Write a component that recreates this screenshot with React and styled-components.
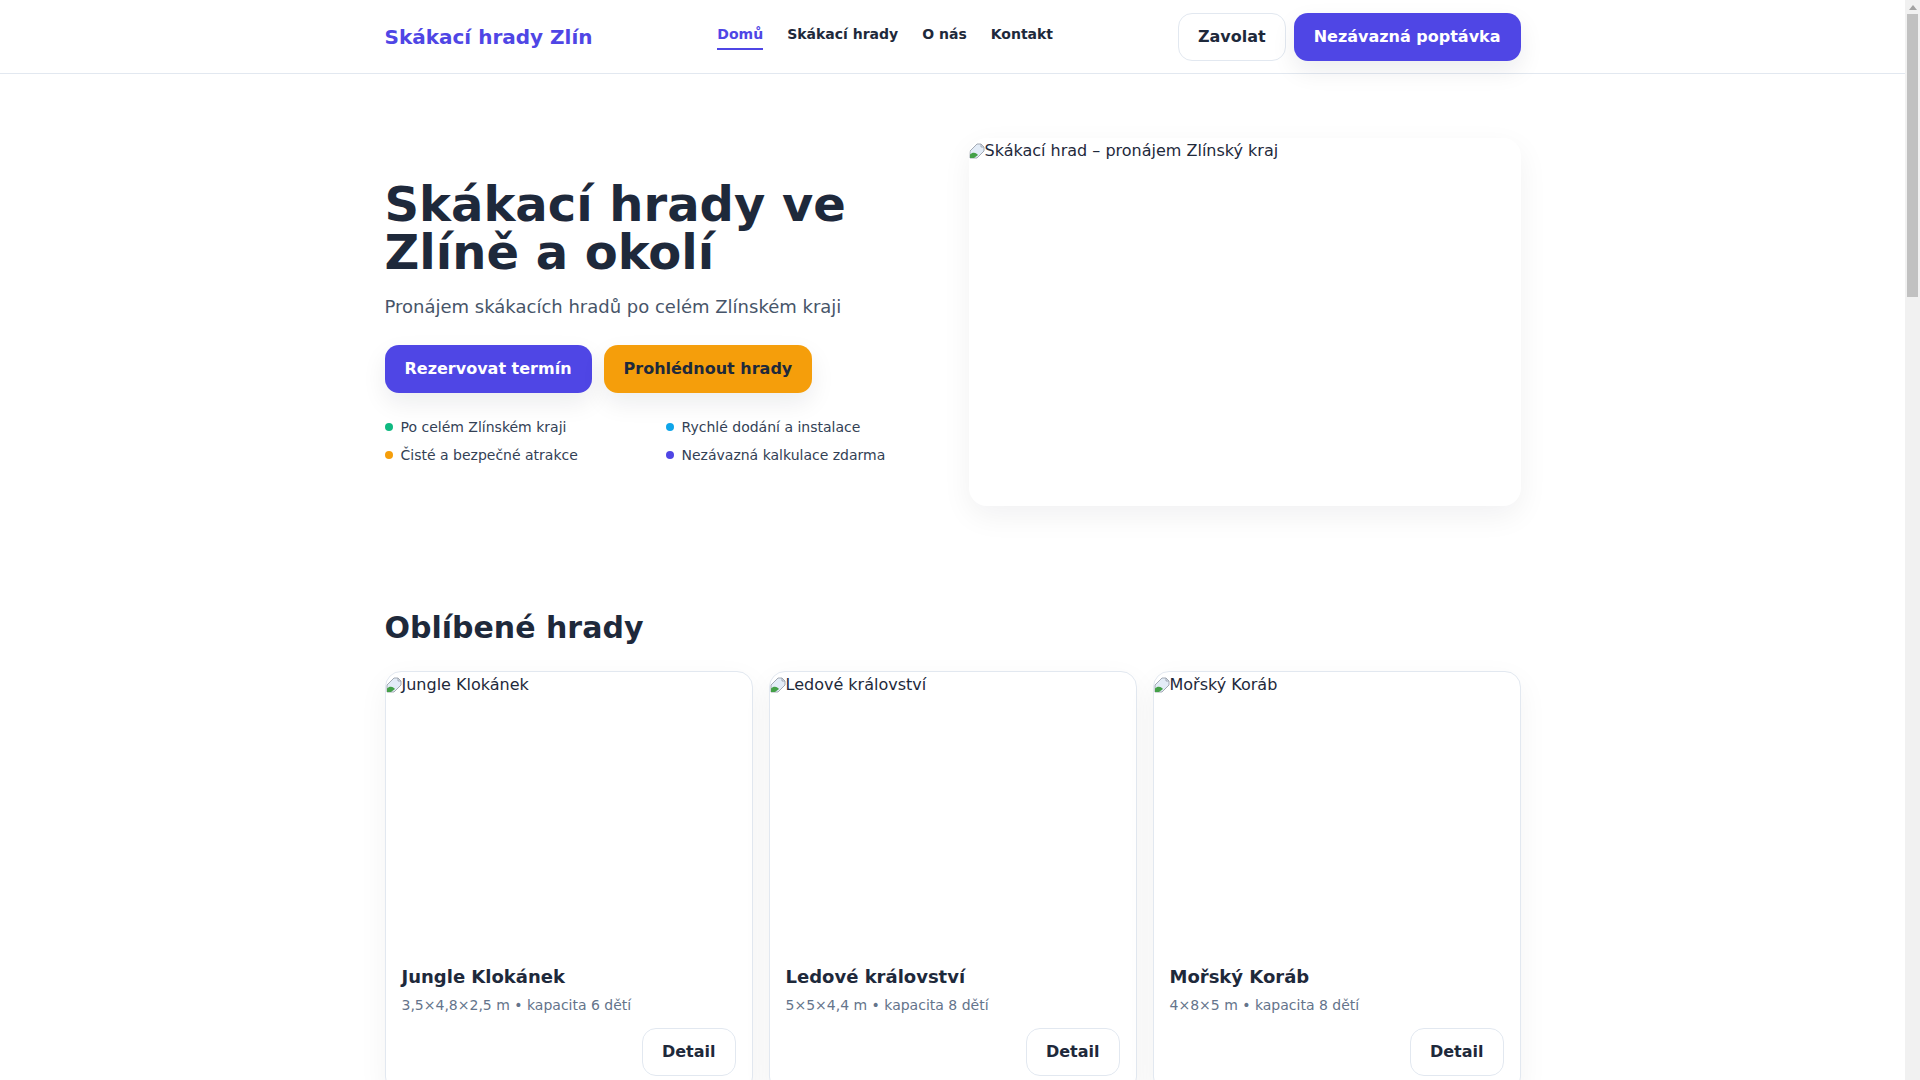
import styled, { createGlobalStyle } from "styled-components";

const GlobalStyle = createGlobalStyle`
  * {
    box-sizing: border-box;
  }
  body {
    margin: 0;
    padding-right: 15px;
    background: #ffffff;
    color: #1e293b;
    font-family: "DejaVu Sans", "Noto Sans", sans-serif;
  }
`;

const Page = styled.div`
  min-height: 4100px;
  background: #fff;
`;

/* stand-in for the browser's classic scrollbar seen in the reference */
const ScrollTrack = styled.div`
  position: fixed;
  top: 0;
  right: 0;
  width: 15px;
  height: 100vh;
  background: #f1f1f1;
  display: flex;
  flex-direction: column;
  align-items: center;
  padding: 5px 2px 0;
  gap: 4px;
`;

const ScrollArrow = styled.div`
  width: 0;
  height: 0;
  border-left: 4px solid transparent;
  border-right: 4px solid transparent;
  border-bottom: 5px solid #a3a3a3;
`;

const ScrollThumb = styled.div`
  width: 100%;
  height: 283px;
  background: #c1c1c1;
`;

const Container = styled.div`
  max-width: 1200px;
  margin: 0 auto;
  padding: 0 32px;
`;

const Header = styled.header`
  border-bottom: 1px solid #e2e8f0;
  background: #fff;
`;

const HeaderInner = styled(Container)`
  height: 73px;
  display: flex;
  align-items: center;
  justify-content: space-between;
`;

const Logo = styled.a`
  font-size: 20px;
  font-weight: 700;
  color: #4f46e5;
  text-decoration: none;
  line-height: 28px;
`;

const Nav = styled.nav`
  display: flex;
  gap: 24px;
  align-items: center;
`;

const NavLink = styled.a`
  font-size: 14px;
  font-weight: 700;
  line-height: 20px;
  padding-bottom: 4px;
  color: ${(p) => (p.$active ? "#4f46e5" : "#1e293b")};
  border-bottom: 2px solid ${(p) => (p.$active ? "#4f46e5" : "transparent")};
  text-decoration: none;
`;

const Actions = styled.div`
  display: flex;
  gap: 8px;
`;

const Button = styled.button`
  height: 48px;
  padding: 0 19px;
  border-radius: 14px;
  font-family: inherit;
  font-size: 16px;
  font-weight: 700;
  cursor: pointer;
  border: 1px solid ${(p) => (p.$variant === "outline" ? "#e2e8f0" : "transparent")};
  background: ${(p) =>
    p.$variant === "primary" ? "#4f46e5" : p.$variant === "accent" ? "#f59e0b" : "#fff"};
  color: ${(p) => (p.$variant === "primary" ? "#fff" : "#1e293b")};
  box-shadow: ${(p) =>
    p.$variant === "outline" ? "none" : "0 10px 24px rgba(15, 23, 42, 0.08)"};
`;

const Hero = styled.section`
  padding: 64px 0;
`;

const HeroGrid = styled(Container)`
  display: grid;
  grid-template-columns: 1fr 1fr;
  gap: 32px;
  align-items: center;
`;

const HeroText = styled.div``;

const Title = styled.h1`
  margin: 0 0 17px;
  font-size: 48px;
  line-height: 48px;
  font-weight: 700;
  color: #1e293b;
`;

const Lead = styled.p`
  margin: 0;
  font-size: 18px;
  line-height: 28px;
  color: #475569;
`;

const ButtonRow = styled.div`
  display: flex;
  gap: 12px;
  margin-top: 24px;
`;

const Bullets = styled.ul`
  list-style: none;
  margin: 24px 0 0;
  padding: 0;
  display: grid;
  grid-template-columns: 1fr 1fr;
  column-gap: 10px;
  row-gap: 8px;
`;

const Bullet = styled.li`
  display: flex;
  align-items: center;
  gap: 8px;
  font-size: 14px;
  line-height: 20px;
  color: #334155;
  &::before {
    content: "";
    width: 8px;
    height: 8px;
    border-radius: 50%;
    background: ${(p) => p.$color};
  }
`;

const HeroImage = styled.div`
  height: 368px;
  background: #fff;
  border-radius: 18px;
  overflow: hidden;
  box-shadow: 0 10px 30px rgba(15, 23, 42, 0.06);
`;

const Alt = styled.div`
  display: flex;
  align-items: center;
  font-size: 16px;
  line-height: 25px;
  color: #1e293b;
  svg {
    flex: none;
  }
`;

const Section = styled.section`
  padding: 40px 0;
`;

const SectionTitle = styled.h2`
  margin: 0 0 25px;
  font-size: 30px;
  line-height: 36px;
  font-weight: 700;
  color: #1e293b;
`;

const CardGrid = styled.div`
  display: grid;
  grid-template-columns: repeat(3, 1fr);
  gap: 16px;
`;

const Card = styled.article`
  background: #fff;
  border: 1px solid #e2e8f0;
  border-radius: 16px;
  overflow: hidden;
  box-shadow: 0 10px 30px rgba(15, 23, 42, 0.05);
`;

const CardImage = styled.div`
  aspect-ratio: 4 / 3;
`;

const CardBody = styled.div`
  padding: 16px;
  display: flex;
  flex-direction: column;
`;

const CardTitle = styled.h3`
  margin: 0;
  font-size: 18px;
  line-height: 27px;
  font-weight: 700;
  color: #1e293b;
`;

const CardMeta = styled.p`
  margin: 5px 0 0;
  font-size: 14px;
  line-height: 20px;
  color: #64748b;
`;

const CardFooter = styled.div`
  display: flex;
  justify-content: flex-end;
  margin-top: 13px;
`;

function BrokenImage({ alt }) {
  return (
    <Alt>
      <svg width="16" height="16" viewBox="0 0 16 16">
        <path d="M1 15V8L8 1h4l3 3v4L8 15z" fill="#e3ecf7" stroke="#9aa1ab" strokeWidth="0.9" />
        <path d="M12 1v3h3" fill="none" stroke="#9aa1ab" strokeWidth="0.9" />
        <path d="M1 15v-3.5c2-2 4.5-2.5 7-0.5l1 1L5 15z" fill="#43a047" />
      </svg>
      <span>{alt}</span>
    </Alt>
  );
}

const bullets = [
  { text: "Po celém Zlínském kraji", color: "#10b981" },
  { text: "Rychlé dodání a instalace", color: "#0ea5e9" },
  { text: "Čisté a bezpečné atrakce", color: "#f59e0b" },
  { text: "Nezávazná kalkulace zdarma", color: "#4f46e5" },
];

const castles = [
  { name: "Jungle Klokánek", meta: "3,5×4,8×2,5 m • kapacita 6 dětí" },
  { name: "Ledové království", meta: "5×5×4,4 m • kapacita 8 dětí" },
  { name: "Mořský Koráb", meta: "4×8×5 m • kapacita 8 dětí" },
];

export default function App() {
  return (
    <Page>
      <GlobalStyle />
      <Header>
        <HeaderInner>
          <Logo href="#">Skákací hrady Zlín</Logo>
          <Nav>
            <NavLink href="#" $active>
              Domů
            </NavLink>
            <NavLink href="#">Skákací hrady</NavLink>
            <NavLink href="#">O nás</NavLink>
            <NavLink href="#">Kontakt</NavLink>
          </Nav>
          <Actions>
            <Button $variant="outline">Zavolat</Button>
            <Button $variant="primary">Nezávazná poptávka</Button>
          </Actions>
        </HeaderInner>
      </Header>

      <Hero>
        <HeroGrid>
          <HeroText>
            <Title>
              Skákací hrady ve
              <br />
              Zlíně a okolí
            </Title>
            <Lead>Pronájem skákacích hradů po celém Zlínském kraji</Lead>
            <ButtonRow>
              <Button $variant="primary">Rezervovat termín</Button>
              <Button $variant="accent">Prohlédnout hrady</Button>
            </ButtonRow>
            <Bullets>
              {bullets.map((b) => (
                <Bullet key={b.text} $color={b.color}>
                  {b.text}
                </Bullet>
              ))}
            </Bullets>
          </HeroText>
          <HeroImage>
            <BrokenImage alt="Skákací hrad – pronájem Zlínský kraj" />
          </HeroImage>
        </HeroGrid>
      </Hero>

      <Section>
        <Container>
          <SectionTitle>Oblíbené hrady</SectionTitle>
          <CardGrid>
            {castles.map((c) => (
              <Card key={c.name}>
                <CardImage>
                  <BrokenImage alt={c.name} />
                </CardImage>
                <CardBody>
                  <CardTitle>{c.name}</CardTitle>
                  <CardMeta>{c.meta}</CardMeta>
                  <CardFooter>
                    <Button $variant="outline">Detail</Button>
                  </CardFooter>
                </CardBody>
              </Card>
            ))}
          </CardGrid>
        </Container>
      </Section>

      <ScrollTrack>
        <ScrollArrow />
        <ScrollThumb />
      </ScrollTrack>
    </Page>
  );
}
